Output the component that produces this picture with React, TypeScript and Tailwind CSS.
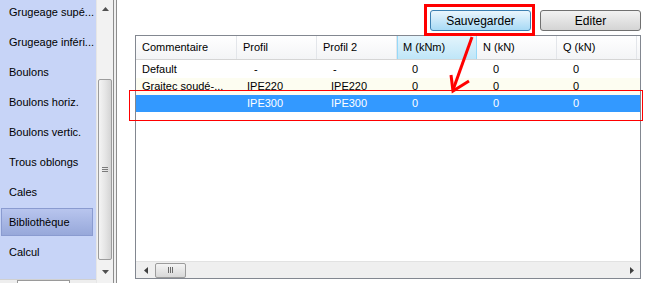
import React from "react";

const menu = [
  "Grugeage supé...",
  "Grugeage inféri...",
  "Boulons",
  "Boulons horiz.",
  "Boulons vertic.",
  "Trous oblongs",
  "Cales",
  "Bibliothèque",
  "Calcul",
];

type Row = { c: string; p: string; p2: string; m: string; n: string; q: string };

const rows: Row[] = [
  { c: "Default", p: "-", p2: "-", m: "0", n: "0", q: "0" },
  { c: "Graitec soudé-...", p: "IPE220", p2: "IPE220", m: "0", n: "0", q: "0" },
  { c: "", p: "IPE300", p2: "IPE300", m: "0", n: "0", q: "0" },
];

const Header: React.FC<{ label: string; w: string; hot?: boolean }> = ({ label, w, hot }) => (
  <div
    className={
      hot
        ? `${w} h-full flex items-center pl-[5px] border-x border-[#96d9f9] bg-gradient-to-b from-[#e3f4fc] to-[#bfe6f8]`
        : `${w} h-full flex items-center pl-[6px] border-r border-[#e3e6ea]`
    }
  >
    {label}
  </div>
);

export default function App() {
  return (
    <div
      className="relative w-[646px] h-[283px] flex bg-white overflow-hidden text-[11px] text-black"
      style={{ fontFamily: '"Liberation Sans", Arial, sans-serif' }}
    >
      {/* Left nav */}
      <div className="w-[96px] h-full flex flex-col bg-[#c7d4f7]">
        <div className="flex-1 flex flex-col">
          {menu.map((m) => (
            <div
              key={m}
              className={
                m === "Bibliothèque"
                  ? "w-[92px] h-[28px] ml-[1px] mt-[-2px] mb-[4px] flex items-center pl-[7px] whitespace-nowrap bg-gradient-to-b from-[#b8c5ee] to-[#97a8da] border border-[#8a9bd0]"
                  : "h-[30px] flex items-center pl-[9px] pb-[6px] whitespace-nowrap"
              }
            >
              {m}
            </div>
          ))}
        </div>
        <div className="h-[4px] bg-[#eeeeee] border-t border-[#d0d0d0] relative">
          <div className="absolute left-[17px] top-[0px] w-[53px] h-[4px] bg-white border-x border-t border-[#9a9a9a]" />
        </div>
      </div>

      {/* Vertical scrollbar */}
      <div className="w-[17px] h-full flex flex-col bg-[#f2f2f2] border-l border-[#e6e6e6]">
        <div className="h-[17px] flex items-center justify-center">
          <svg width="7" height="4" viewBox="0 0 7 4">
            <path d="M0 4 L3.5 0 L7 4 Z" fill="#505050" />
          </svg>
        </div>
        <div className="h-[62px]" />
        <div className="h-[181px] mx-[1px] rounded-[2px] border border-[#9c9c9c] bg-gradient-to-r from-[#f4f4f4] via-[#e6e6e6] to-[#d4d4d4] flex items-center justify-center">
          <div className="flex flex-col gap-[1px]">
            <div className="w-[6px] h-[1px] bg-[#7a7a7a]" />
            <div className="w-[6px] h-[1px] bg-[#7a7a7a]" />
            <div className="w-[6px] h-[1px] bg-[#7a7a7a]" />
          </div>
        </div>
        <div className="flex-1 flex items-center justify-center">
          <svg width="7" height="4" viewBox="0 0 7 4">
            <path d="M0 0 L7 0 L3.5 4 Z" fill="#505050" />
          </svg>
        </div>
      </div>

      {/* Splitter */}
      <div className="w-[4px] h-full border-x border-[#8d8d8d] bg-[#f0f0f0]" />

      {/* Right content */}
      <div className="flex-1 flex flex-col pl-[18px] pr-[5px] pt-[10px] pb-[4px]">
        <div className="flex justify-end gap-[9px] h-[21px]">
          <div className="w-[101px] h-[21px] flex items-center justify-center rounded-[3px] border border-[#3c7fb1] bg-gradient-to-b from-[#eaf6fd] to-[#a7d9f5] text-[12px]">
            Sauvegarder
          </div>
          <div className="w-[101px] h-[21px] flex items-center justify-center rounded-[3px] border border-[#707070] bg-gradient-to-b from-[#f2f2f2] to-[#d4d4d4] text-[12px]">
            Editer
          </div>
        </div>

        <div className="mt-[4px] flex-1 flex flex-col border border-[#828790] bg-white">
          <div className="h-[24px] flex text-[11px] bg-gradient-to-b from-white to-[#f3f4f6] border-b border-[#d5d5d5]">
            <Header label="Commentaire" w="w-[101px]" />
            <Header label="Profil" w="w-[80px]" />
            <Header label="Profil 2" w="w-[80px]" />
            <Header label="M (kNm)" w="w-[80px]" hot />
            <Header label="N (kN)" w="w-[80px]" />
            <Header label="Q (kN)" w="w-[80px]" />
          </div>
          <div className="flex-1 flex flex-col pt-[1px]">
            {rows.map((r, i) => (
              <div
                key={i}
                className={
                  "h-[17px] flex items-center " +
                  (i === 2 ? "bg-[#3399ff] text-white" : i === 1 ? "bg-[#fdfdf1]" : "")
                }
              >
                <div className="w-[101px] pl-[6px] whitespace-nowrap overflow-hidden">{r.c}</div>
                <div className={r.p === "-" ? "w-[80px] pl-[17px]" : "w-[80px] pl-[10px]"}>{r.p}</div>
                <div className={r.p2 === "-" ? "w-[80px] pl-[16px]" : "w-[80px] pl-[14px]"}>{r.p2}</div>
                <div className="w-[80px] pl-[15px]">{r.m}</div>
                <div className="w-[80px] pl-[16px]">{r.n}</div>
                <div className="w-[80px] pl-[16px]">{r.q}</div>
              </div>
            ))}
          </div>
          {/* Horizontal scrollbar */}
          <div className="h-[17px] flex items-center bg-[#efefef] border-t border-[#e2e2e2]">
            <div className="w-[19px] h-full flex items-center justify-center">
              <svg width="4" height="7" viewBox="0 0 4 7">
                <path d="M4 0 L0 3.5 L4 7 Z" fill="#404040" />
              </svg>
            </div>
            <div className="w-[31px] h-[15px] rounded-[2px] border border-[#9c9c9c] bg-gradient-to-b from-[#f4f4f4] to-[#d8d8d8] flex items-center justify-center gap-[1px]">
              <div className="w-[1px] h-[6px] bg-[#6a6a6a]" />
              <div className="w-[1px] h-[6px] bg-[#6a6a6a]" />
              <div className="w-[1px] h-[6px] bg-[#6a6a6a]" />
            </div>
            <div className="flex-1" />
            <div className="w-[17px] h-full flex items-center justify-center">
              <svg width="4" height="7" viewBox="0 0 4 7">
                <path d="M0 0 L4 3.5 L0 7 Z" fill="#404040" />
              </svg>
            </div>
          </div>
        </div>
      </div>

      {/* Annotations */}
      <div className="absolute left-[424px] top-[4px] w-[111px] h-[32px] border-[3px] border-[#ff0000]" />
      <div className="absolute left-[129px] top-[90px] w-[514px] h-[31px] border border-[#ff0000]" />
      <svg className="absolute left-0 top-0" width="646" height="283" viewBox="0 0 646 283">
        <path d="M472 37 L453 90" stroke="#ff0000" strokeWidth="3" fill="none" />
        <path d="M451 75 L453 91 L469 81" stroke="#ff0000" strokeWidth="3" fill="none" strokeLinejoin="miter" />
      </svg>
    </div>
  );
}
